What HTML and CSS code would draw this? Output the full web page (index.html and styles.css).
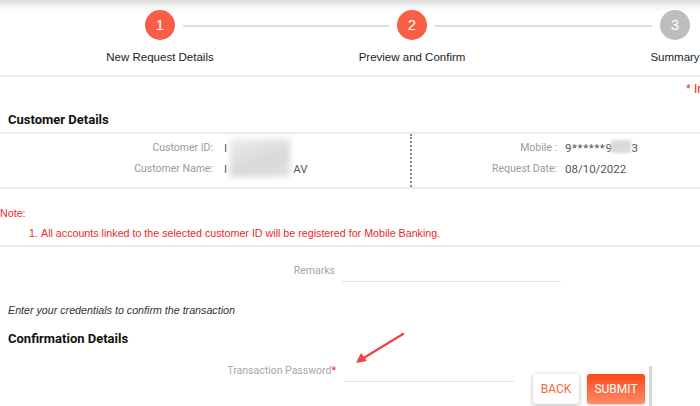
FILE: index.html
```html
<!DOCTYPE html>
<html>
<head>
<meta charset="utf-8">
<link rel="stylesheet" href="styles.css">
</head>
<body>
<div class="page">
  <div class="stepper">
    <div class="step">
      <div class="circle active">1</div>
      <div class="step-label">New Request Details</div>
    </div>
    <div class="connector c1"></div>
    <div class="step">
      <div class="circle active">2</div>
      <div class="step-label">Preview and Confirm</div>
    </div>
    <div class="connector c2"></div>
    <div class="step">
      <div class="circle pending">3</div>
      <div class="step-label">Summary</div>
    </div>
  </div>

  <div class="required">* Indicates mandatory fields</div>

  <h2 class="section-title bordered">Customer Details</h2>

  <div class="details">
    <div class="half left">
      <div class="drow"><span class="dlabel">Customer ID:</span><span class="dvalue">I</span></div>
      <div class="drow"><span class="dlabel">Customer Name:</span><span class="dvalue">I<span class="gap"></span>AV</span></div>
      <div class="redact r1"></div>
    </div>
    <div class="half right">
      <div class="drow"><span class="dlabel">Mobile :</span><span class="dvalue"><span class="masked">9******9</span><span class="gap2"></span>3</span></div>
      <div class="drow"><span class="dlabel">Request Date:</span><span class="dvalue">08/10/2022</span></div>
      <div class="redact r2"></div>
    </div>
  </div>

  <div class="note">
    <div class="note-title">Note:</div>
    <ol class="note-list">
      <li>All accounts linked to the selected customer ID will be registered for Mobile Banking.</li>
    </ol>
  </div>

  <div class="form-row remarks">
    <label class="flabel">Remarks</label>
    <div class="finput wide"></div>
  </div>

  <p class="hint">Enter your credentials to confirm the transaction</p>

  <h2 class="section-title">Confirmation Details</h2>

  <div class="form-row confirm">
    <label class="flabel">Transaction Password<span class="star">*</span></label>
    <div class="finput narrow"></div>
    <button class="btn back">BACK</button>
    <button class="btn submit">SUBMIT</button>
    <div class="scrollbar"></div>
  </div>

  <svg class="arrow" width="60" height="40" viewBox="0 0 60 40">
    <line x1="53" y1="3" x2="12" y2="28" stroke="#f04444" stroke-width="2.4" stroke-linecap="round"/>
    <polygon points="6,32 11,22 17,30" fill="#f04444"/>
  </svg>
</div>
</body>
</html>
```

FILE: styles.css
```css
* { box-sizing: border-box; }
html, body { margin: 0; padding: 0; }
body {
  width: 700px;
  height: 406px;
  overflow: hidden;
  background: #fff;
  font-family: "Liberation Sans", Arial, sans-serif;
}
.page { position: relative; width: 700px; height: 406px; }

.stepper {
  display: flex;
  align-items: flex-start;
  height: 77px;
  padding: 10px 0 0 145px;
  border-bottom: 2px solid #ececec;
  background: linear-gradient(#dcdcdc 0, #f4f4f4 6px, #fff 13px);
}
.step {
  width: 30px;
  display: flex;
  flex-direction: column;
  align-items: center;
}
.circle {
  width: 30px;
  height: 30px;
  border-radius: 50%;
  color: #fff;
  font-size: 15px;
  line-height: 30px;
  text-align: center;
}
.circle.active { background: #fa5e47; }
.circle.pending { background: #bdbdbd; }
.step-label {
  margin-top: 9px;
  white-space: nowrap;
  font-size: 11.5px;
  line-height: 16px;
  color: #222;
}
.connector {
  height: 2px;
  margin: 15px 8px 0;
  background: #dedede;
}
.c1 { width: 206px; }
.c2 { width: 217px; }

.required {
  height: 24px;
  padding: 4px 0 0 686px;
  white-space: nowrap;
  font-size: 12px;
  line-height: 16px;
  color: #f01818;
}

.section-title {
  margin: 0;
  padding: 11px 0 4px 8px;
  font-family: Roboto, sans-serif;
  font-weight: 700;
  font-size: 13px;
  line-height: 16px;
  color: #111;
}
.section-title.bordered { border-bottom: 2px solid #ececec; }

.details {
  display: flex;
  border-bottom: 2px solid #ececec;
  font-family: Roboto, sans-serif;
  font-size: 10.5px;
}
.half {
  position: relative;
  padding: 3px 0 8px;
}
.half.left { width: 412px; border-right: 2px dotted #888; }
.half.right { flex: 1; }
.drow {
  display: flex;
  height: 21px;
  align-items: center;
}
.left .dlabel { width: 213px; }
.right .dlabel { width: 145px; }
.dlabel { text-align: right; color: #9a9a9a; }
.left .dvalue { margin-left: 11px; }
.right .dvalue { margin-left: 8px; }
.dvalue { color: #555; font-size: 11.5px; white-space: nowrap; }
.masked { letter-spacing: 0.6px; }
.gap { display: inline-block; width: 66px; }
.gap2 { display: inline-block; width: 19px; }
.redact {
  position: absolute;
  background: linear-gradient(160deg, #ececec, #d8d8d8 60%, #e2e2e2);
  filter: blur(3px);
}
.r1 { left: 230px; top: 5px; width: 60px; height: 38px; }
.r2 { left: 199px; top: 6px; width: 20px; height: 13px; background: #dadada; filter: blur(1.5px); }

.note {
  padding: 16px 0 4px;
  border-bottom: 2px solid #ececec;
  color: #e82a2a;
  font-size: 10.7px;
  line-height: 16px;
}
.note-title { height: 20px; }
.note-list { margin: 0; padding-left: 41px; }

.form-row {
  display: flex;
  font-family: Roboto, sans-serif;
  font-size: 10.5px;
}
.flabel {
  width: 336px;
  padding-right: 7px;
  text-align: right;
  color: #a6a6a6;
  line-height: 16px;
  white-space: nowrap;
}
.finput { border-bottom: 1px solid #e4e4e4; }
.remarks {
  margin-top: 12px;
  height: 23px;
  align-items: center;
}
.remarks .flabel { width: 342px; }
.finput.wide { width: 219px; height: 23px; }

.hint {
  margin: 20px 0 0;
  padding-left: 8px;
  font-style: italic;
  font-size: 10.7px;
  line-height: 16px;
  color: #333;
}
.hint + .section-title { padding-top: 13px; }

.confirm {
  margin-top: 12px;
  align-items: flex-start;
  height: 44px;
}
.confirm .flabel { width: 344px; padding-right: 8px; }
.star { color: #f02020; }
.finput.narrow { width: 170px; height: 19px; }
.btn {
  margin-top: 11px;
  height: 30px;
  border: none;
  border-radius: 3px;
  font-family: Roboto, sans-serif;
  font-size: 12px;
  padding: 0;
  cursor: pointer;
}
.back {
  width: 46px;
  margin-left: 19px;
  background: #fff;
  color: #f5673c;
  box-shadow: 0 1px 4px rgba(0,0,0,0.3);
}
.submit {
  width: 58px;
  margin-left: 8px;
  color: #fff;
  background: linear-gradient(#fd4716, #fd8b66);
  box-shadow: 0 1px 3px rgba(0,0,0,0.2);
}
.scrollbar {
  width: 3px;
  height: 44px;
  margin: 3px 0 0 4px;
  background: #d6d6d6;
}

.arrow {
  position: absolute;
  left: 350px;
  top: 331px;
}
```
